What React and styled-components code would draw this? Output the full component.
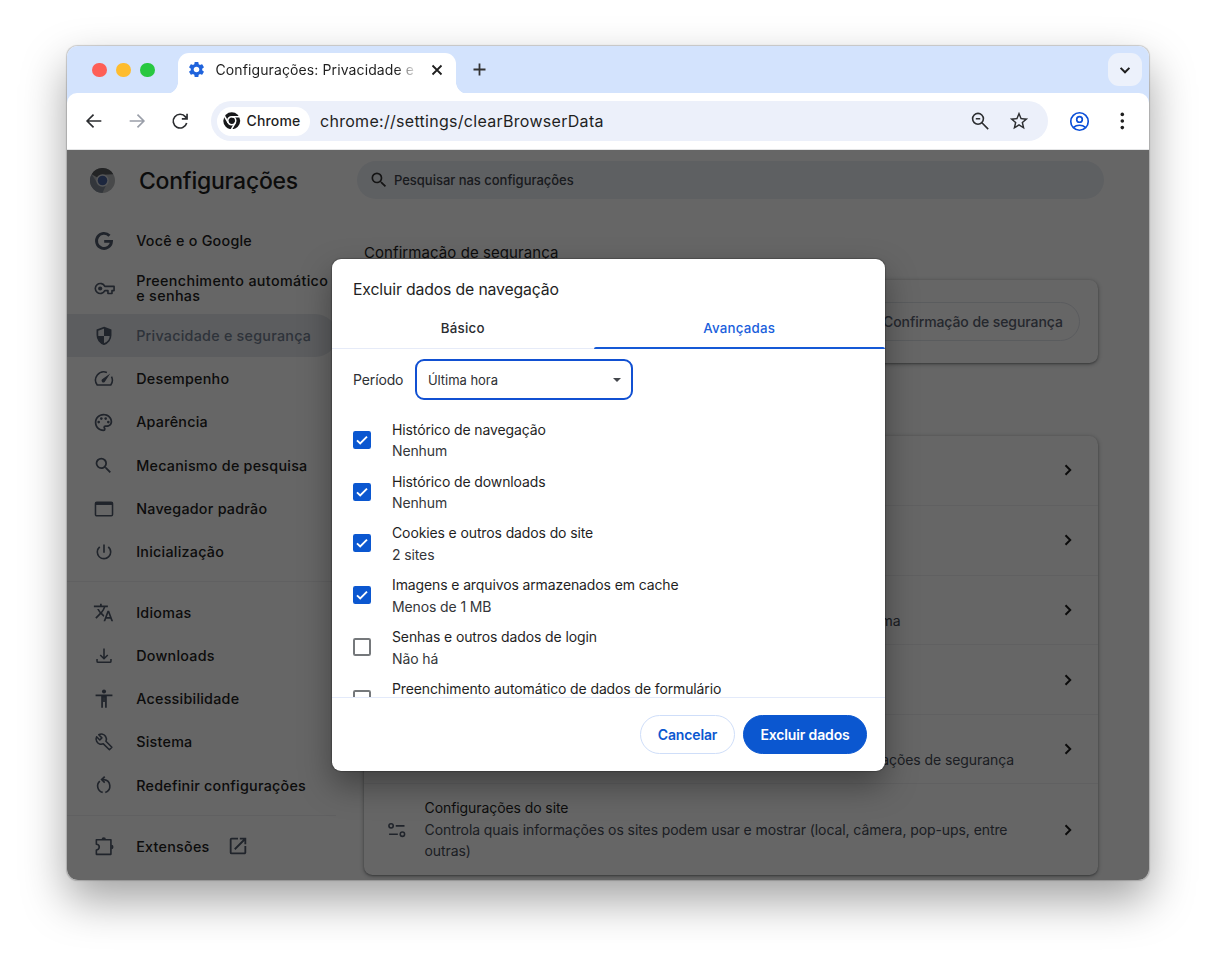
import React from 'react';
import styled, { createGlobalStyle } from 'styled-components';
import {
  MdSearch, MdOutlinePalette, MdTranslate, MdOpenInNew, MdPowerSettingsNew,
  MdStarOutline, MdSettings,
} from 'react-icons/md';

const GlobalStyle = createGlobalStyle`
  * { box-sizing: border-box; }
  body { margin: 0; background: #fff; font-family: Inter, "Liberation Sans", sans-serif; color: #1f1f1f; }
  svg { display: block; flex: none; }
  button { font-family: inherit; padding: 0; margin: 0; }
`;

const Desktop = styled.div`
  height: 969px;
  padding: 46px 67px 0;
  overflow: hidden;
`;
const Window = styled.div`
  width: 1082px;
  height: 834px;
  border-radius: 11px;
  overflow: hidden;
  display: flex;
  flex-direction: column;
  box-shadow: 0 0 1px 0.5px rgba(0, 0, 0, 0.18), 0 20px 45px rgba(0, 0, 0, 0.37);
`;

/* Tab strip */
const TabStrip = styled.div`
  height: 48px;
  flex: none;
  display: flex;
  align-items: flex-start;
  padding: 7px 7px 0 25px;
  background: #d3e3fd;
`;
const Lights = styled.div`
  display: flex;
  gap: 9.3px;
  padding-top: 9.5px;
  width: 86px;
`;
const Light = styled.span`
  width: 14.8px;
  height: 14.8px;
  border-radius: 50%;
  background: ${p => p.$color};
`;
const Tab = styled.div`
  position: relative;
  width: 278px;
  height: 41px;
  border-radius: 11px 11px 0 0;
  background: #fff;
  display: flex;
  align-items: center;
  padding: 0 12.5px 8px 9px;
  &::before, &::after {
    content: "";
    position: absolute;
    bottom: 0;
    width: 12px;
    height: 12px;
  }
  &::before { left: -12px; background: radial-gradient(circle at 0 0, transparent 11.6px, #fff 12.2px); }
  &::after { right: -12px; background: radial-gradient(circle at 100% 0, transparent 11.6px, #fff 12.2px); }
`;
const TabTitle = styled.div`
  flex: 1;
  margin-left: 9.5px;
  margin-right: 10px;
  white-space: nowrap;
  font-size: 14px;
  line-height: 22px;
  letter-spacing: 0.11px;
  mask-image: linear-gradient(to right, #000 180px, transparent 202px);
`;
const NewTab = styled.div`
  margin-left: 16px;
  padding-top: 9px;
  flex: 1;
`;
const TabSearch = styled.div`
  width: 34px;
  height: 33px;
  border-radius: 11px;
  background: #ecf1fb;
  display: grid;
  place-items: center;
`;

/* Toolbar */
const Toolbar = styled.div`
  height: 56px;
  flex: none;
  background: #fff;
  border-radius: 10px 10px 0 0;
  margin-top: -1px;
  padding: 0 16px 0 16px;
  display: flex;
  align-items: center;
`;
const ToolbarBack = styled.div`
  background: linear-gradient(#d3e3fd 14px, #fff 14px);
  flex: none;
  border-bottom: 1px solid #e4e5e6;
`;
const NavButtons = styled.div`
  display: flex;
  gap: 21px;
  width: 128px;
  flex: none;
`;
const Omnibox = styled.div`
  width: 837px;
  flex: none;
  height: 40px;
  border-radius: 20px;
  background: #ecf0fa;
  display: flex;
  align-items: center;
  padding: 0 18px 0 6px;
`;
const Chip = styled.div`
  width: 93px;
  height: 29px;
  border-radius: 15px;
  background: #fff;
  display: flex;
  align-items: center;
  gap: 6px;
  padding: 0 0 1px 6px;
  font-size: 14px;
  font-weight: 500;
  letter-spacing: 0.17px;
`;
const Url = styled.div`
  flex: 1;
  margin-left: 10px;
  font-size: 16px;
  line-height: 20px;
  letter-spacing: 0.29px;
`;
const OmniIcons = styled.div`
  display: flex;
  gap: 17px;
`;
const ProfileButton = styled.div`
  margin-left: 21px;
`;
const MenuButton = styled.div`
  margin-left: 21px;
`;

/* Page */
const Page = styled.div`
  position: relative;
  flex: 1;
  min-height: 0;
  background: #fff;
  overflow: hidden;
  display: flex;
`;
const Sidebar = styled.nav`
  width: 290px;
  flex: none;
`;
const Brand = styled.div`
  height: 62px;
  display: flex;
  align-items: center;
  padding: 0 0 1px 23px;
  gap: 24px;
  font-size: 23px;
  font-weight: 500;
  letter-spacing: -0.25px;
`;
const MenuGroup = styled.div`
  padding-top: ${p => p.$top || 0}px;
`;
const MenuItem = styled.div`
  width: 270px;
  height: ${p => (p.$tall ? 51.8 : 43.2)}px;
  border-radius: 0 22px 22px 0;
  display: flex;
  align-items: center;
  padding-left: 25.6px;
  gap: 21.6px;
  color: ${p => (p.$active ? '#747f92' : '#222222')};
  background: ${p => (p.$active ? '#e6e9ed' : 'transparent')};
  svg { color: #505a6b; }
`;
const MenuIcon = styled.span`
  width: 22px;
  height: 22px;
  display: grid;
  place-items: center;
`;
const MenuLabel = styled.span`
  font-size: 14.3px;
  line-height: 15.5px;
  font-weight: 500;
  letter-spacing: ${p => (p.$tall ? 0.36 : 0.26)}px;
  white-space: pre;
`;
const MenuDivider = styled.div`
  height: 1px;
  width: 269px;
  margin: 8.2px 0 8.6px;
  background: #f0f1f3;
`;
const ExternalMark = styled.span`
  margin-left: -4px;
`;

const Main = styled.main`
  width: 747px;
  padding-top: 11px;
`;
const SearchField = styled.div`
  height: 38px;
  border-radius: 19px;
  background: #ebeff5;
  display: flex;
  align-items: center;
  gap: 5.5px;
  padding: 0 0 1px 11.5px;
  font-size: 13px;
  color: #3f444c;
  font-weight: 500;
  letter-spacing: -0.02px;
  svg { color: #333; }
`;
const SectionTitle = styled.h2`
  margin: 43px 0 17px 7px;
  font-size: 15px;
  font-weight: 400;
  line-height: 21px;
  letter-spacing: 0.07px;
`;
const Card = styled.section`
  width: 734px;
  margin-left: 7px;
  border-radius: 8.5px;
  background: #fff;
  box-shadow: 0 1px 2px rgba(60, 64, 67, 0.45), 0 1px 4px 1px rgba(60, 64, 67, 0.25);
`;
const CheckCard = styled(Card)`
  height: 83px;
  display: flex;
  align-items: center;
  justify-content: flex-end;
  padding-right: 18px;
`;
const PillAction = styled.button`
  height: 39px;
  width: 215px;
  padding: 0 17px;
  text-align: right;
  border: 1px solid #e2e5ec;
  border-radius: 20px;
  background: transparent;
  font-size: 14px;
  font-weight: 500;
  letter-spacing: -0.08px;
  color: #5c6473;
  white-space: nowrap;
`;
const PrivacyCard = styled(Card)`
  margin-top: 72.5px;
`;
const PrivacyRow = styled.div`
  height: ${p => (p.$tall ? 91.4 : 69.6)}px;
  border-top: ${p => (p.$first ? 'none' : '1px solid #f0f1f3')};
  display: flex;
  align-items: center;
  padding: 0 21px 0 23.5px;
`;
const RowIcon = styled.span`
  width: 37px;
  flex: none;
  color: #505a6b;
  svg { margin-left: -1px; }
`;
const RowText = styled.div`
  flex: 1;
  font-size: 14px;
  line-height: 21.6px;
  letter-spacing: -0.083px;
`;
const RowDesc = styled.div`
  width: 590px;
  color: #474d57;
  padding-right: ${p => p.$end || 0}px;
  padding-top: ${p => p.$drop || 0}px;
  text-align: ${p => (p.$end !== undefined ? 'right' : 'left')};
`;

/* Dialog */
const Scrim = styled.div`
  position: absolute;
  inset: 0;
  background: rgba(0, 0, 0, 0.6);
`;
const Dialog = styled.div`
  position: absolute;
  left: 264.5px;
  top: 109px;
  width: 553px;
  height: 512px;
  border-radius: 9px;
  background: #fff;
  overflow: hidden;
  display: flex;
  flex-direction: column;
  box-shadow: 0 0 1px 1px rgba(0, 0, 0, 0.2), 0 14px 32px rgba(0, 0, 0, 0.36);
`;
const DialogTitle = styled.h1`
  margin: 0;
  height: 49px;
  flex: none;
  padding: 19.5px 0 0 21.5px;
  font-size: 15.8px;
  line-height: 22px;
  font-weight: 400;
  letter-spacing: -0.15px;
`;
const Tabs = styled.div`
  height: 41px;
  flex: none;
  display: flex;
  border-bottom: 1px solid #e6ebf8;
`;
const TabItem = styled.div`
  position: relative;
  width: ${p => p.$width}px;
  padding-top: 9.5px;
  line-height: 21px;
  text-align: center;
  font-size: 13.3px;
  font-weight: 500;
  letter-spacing: 0.22px;
  color: ${p => (p.$active ? '#1a5fdc' : '#2a2c30')};
  &::after {
    content: "";
    position: absolute;
    left: 0;
    right: 0;
    bottom: -1px;
    height: ${p => (p.$active ? 2.5 : 0)}px;
    border-radius: 2px 2px 0 0;
    background: #1559d6;
  }
`;
const DialogBody = styled.div`
  height: 347.6px;
  flex: none;
  overflow: hidden;
  padding: 10px 0 0 21.5px;
`;
const PeriodRow = styled.div`
  display: flex;
  align-items: center;
  gap: 12px;
  margin-bottom: 18.9px;
  font-size: 14px;
  letter-spacing: -0.13px;
  color: #2e3034;
`;
const Select = styled.div`
  width: 218px;
  height: 41px;
  border: 2px solid #1150d2;
  border-radius: 9px;
  display: flex;
  align-items: center;
  justify-content: space-between;
  padding: 0 9px 0 10.5px;
  font-size: 13px;
  letter-spacing: -0.03px;
`;
const DataRow = styled.div`
  height: 51.8px;
  display: flex;
  align-items: flex-start;
  gap: 21px;
`;
const CheckBox = styled.span`
  width: 18px;
  height: 18px;
  margin-top: 12px;
  border-radius: 2.2px;
  border: 2px solid ${p => (p.$checked ? '#0b57d0' : '#75787b')};
  background: ${p => (p.$checked ? '#0b57d0' : '#fff')};
  display: grid;
  place-items: center;
`;
const DataText = styled.div`
  font-size: 14px;
  line-height: 21.6px;
  letter-spacing: -0.12px;
  color: #1f1f1f;
`;
const DataSub = styled.div`
  color: #34363a;
`;
const DialogActions = styled.div`
  flex: 1;
  border-top: 1px solid #e3eafa;
  display: flex;
  justify-content: flex-end;
  gap: 8px;
  padding: 17.4px 17.5px 0 0;
`;
const ActionButton = styled.button`
  width: ${p => p.$width}px;
  height: 39px;
  border-radius: 20px;
  border: 1px solid ${p => (p.$primary ? '#0b57d0' : '#cfdef9')};
  background: ${p => (p.$primary ? '#0b57d0' : '#fff')};
  color: ${p => (p.$primary ? '#fff' : '#0b57d0')};
  font-size: 14px;
  font-weight: 600;
  letter-spacing: -0.14px;
`;

const Icon = ({ size = 22, box = 24, children, ...rest }) => (
  <svg width={size} height={size} viewBox={`0 0 ${box} ${box}`} fill="none" stroke="currentColor" strokeWidth="1.8" {...rest}>{children}</svg>
);

const ChromeIcon = () => (
  <Icon size={17.5} stroke="#fff" strokeWidth="2.1">
    <circle cx="12" cy="12" r="11.6" fill="#17181a" stroke="none" />
    <circle cx="12" cy="12" r="5.5" fill="#17181a" />
    <path d="M12 6.5H23.500" />
    <path d="M12 6.500H23.500" transform="rotate(120 12 12)" />
    <path d="M12 6.500H23.500" transform="rotate(240 12 12)" />
  </Icon>
);
const GoogleG = () => (
  <Icon size={22} strokeWidth="3.1"><path d="M18 6.3A8.2 8.2 0 1 0 20.2 12.4H12.2" /></Icon>
);
const KeyIcon = () => (
  <Icon size={23} strokeWidth="1.7">
    <path d="M12.3 9.8A5.2 5.2 0 1 0 12.3 14.2H15.6V17.2H19.8V14.2H22V9.8Z" strokeLinejoin="round" />
    <circle cx="7.5" cy="12" r="2.2" fill="currentColor" stroke="none" />
  </Icon>
);
const ShieldIcon = () => (
  <Icon size={22}>
    <path d="M12 2.9 19.2 5.6V11.2C19.2 15.6 16.2 19.6 12 20.9 7.8 19.6 4.8 15.6 4.8 11.2V5.6Z" strokeWidth="1.9" />
    <path d="M12 3V12H19.2V5.6ZM12 12V21C8 19.7 5.2 16 4.8 12Z" fill="currentColor" stroke="none" />
  </Icon>
);
const SpeedIcon = () => (
  <Icon size={22} strokeWidth="1.7">
    <path d="M15.2 4.9A9 9 0 0 0 4.6 18.6H19.4A9 9 0 0 0 20.2 9.4" />
    <path d="M18.8 6 10.4 12A2 2 0 1 0 13.1 14.7Z" fill="currentColor" stroke="none" />
  </Icon>
);
const BrowserIcon = () => (
  <Icon size={22} strokeWidth="1.7">
    <rect x="2.7" y="4.6" width="18.6" height="14.8" rx="1.4" />
    <path d="M3 6.2H21" strokeWidth="2.8" />
  </Icon>
);
const DownloadIcon = () => (
  <Icon size={22} strokeWidth="1.7"><path d="M12 3.8V14.8M7.9 10.9 12 15 16.1 10.9M4.4 15.4V17.7Q4.4 18.9 5.6 18.9H18.4Q19.6 18.9 19.6 17.7V15.4" /></Icon>
);
const AccessIcon = () => (
  <Icon size={22}>
    <circle cx="12" cy="3.8" r="2.2" fill="currentColor" stroke="none" />
    <path d="M2.8 8H21.2M9.9 8V21.6M14.1 8V21.6M9.5 9.4H14.5M12 9V15.4" strokeWidth="1.9" />
  </Icon>
);
const WrenchIcon = () => (
  <Icon size={22} strokeWidth="1.7">
    <path d="M3.9 6.3 7.4 9.8 9.7 7.5 6.3 4.1C9 2.6 12.2 3.4 13.8 6 14.9 7.7 14.8 9.6 14.1 11.2L20.6 17.8 17.9 20.5 11.3 14C8.6 15 5.4 14.1 4 11.3 3.1 9.7 3.1 7.9 3.9 6.3Z" strokeLinejoin="round" />
  </Icon>
);
const ResetIcon = () => (
  <Icon size={22} strokeWidth="1.8">
    <path d="M7.5 7.7A7.2 7.2 0 0 0 10.6 20.1M13.4 20.1A7.2 7.2 0 0 0 12 6.1H10" />
    <path d="M12.8 2.8 9.4 6.1 12.8 9.4" />
  </Icon>
);
const PuzzleIcon = () => (
  <Icon size={23} strokeWidth="1.7">
    <path d="M3.5 5H18.7V20.2H3.5V15.6A3 3 0 0 0 3.5 9.6Z" strokeLinejoin="round" />
    <path d="M8.9 4.7A2.3 2.3 0 0 1 13.5 4.7ZM19.1 10.3A2.3 2.3 0 0 1 19.1 14.9Z" fill="currentColor" stroke="none" />
  </Icon>
);
const TuneIcon = () => (
  <Icon size={20} strokeWidth="1.9">
    <circle cx="4.9" cy="7" r="2.6" /><path d="M10.5 7H21M2.5 17H13" /><circle cx="18.5" cy="17" r="2.6" />
  </Icon>
);
const ZoomOutIcon = () => (
  <Icon size={22} box={22} strokeWidth="1.6" color="#2c2e31">
    <circle cx="9" cy="8.8" r="5.4" /><path d="M12.9 12.8 19.2 19.1M6.8 8.8H11.2" />
  </Icon>
);
const Chevron = () => (
  <Icon size={18} box={18} strokeWidth="2"><path d="M6.5 4.3 11.2 9 6.5 13.7" /></Icon>
);
const BrandLogo = () => (
  <svg width="25" height="25" viewBox="0 0 24 24">
    <circle cx="12" cy="12" r="12" fill="#b4b6b9" />
    <path d="M12 12 1.6 6A12 12 0 0 1 22.4 6L12 6.5Z" fill="#585a5d" />
    <path d="M1.6 6A12 12 0 0 0 12 24L16 15 7 14.5Z" fill="#7f8894" />
    <circle cx="12" cy="12" r="6" fill="#d4d6da" />
    <circle cx="12" cy="12" r="4.6" fill="#4a629b" />
  </svg>
);

const primaryMenu = [
  { label: 'Você e o Google', icon: <GoogleG /> },
  { label: 'Preenchimento automático\ne senhas', icon: <KeyIcon />, tall: true },
  { label: 'Privacidade e segurança', icon: <ShieldIcon />, active: true },
  { label: 'Desempenho', icon: <SpeedIcon /> },
  { label: 'Aparência', icon: <MdOutlinePalette size={21} /> },
  { label: 'Mecanismo de pesquisa', icon: <MdSearch size={21} /> },
  { label: 'Navegador padrão', icon: <BrowserIcon /> },
  { label: 'Inicialização', icon: <MdPowerSettingsNew size={20} /> },
];
const advancedMenu = [
  { label: 'Idiomas', icon: <MdTranslate size={21} /> },
  { label: 'Downloads', icon: <DownloadIcon /> },
  { label: 'Acessibilidade', icon: <AccessIcon /> },
  { label: 'Sistema', icon: <WrenchIcon /> },
  { label: 'Redefinir configurações', icon: <ResetIcon /> },
];
const extensionsMenu = [{ label: 'Extensões', icon: <PuzzleIcon />, external: true }];

const dataTypes = [
  { label: 'Histórico de navegação', sub: 'Nenhum', checked: true },
  { label: 'Histórico de downloads', sub: 'Nenhum', checked: true },
  { label: 'Cookies e outros dados do site', sub: '2 sites', checked: true },
  { label: 'Imagens e arquivos armazenados em cache', sub: 'Menos de 1 MB', checked: true },
  { label: 'Senhas e outros dados de login', sub: 'Não há' },
  { label: 'Preenchimento automático de dados de formulário' },
];

const Menu = ({ items }) => items.map(it => (
  <MenuItem key={it.label} $tall={it.tall} $active={it.active}>
    <MenuIcon>{it.icon}</MenuIcon>
    <MenuLabel $tall={it.tall}>{it.label}</MenuLabel>
    {it.external && <ExternalMark><MdOpenInNew size={22} /></ExternalMark>}
  </MenuItem>
));

export default function App() {
  return (
    <Desktop>
      <GlobalStyle />
      <Window>
        <TabStrip>
          <Lights>
            <Light $color="#fe5f57" /><Light $color="#febc2e" /><Light $color="#28c840" />
          </Lights>
          <Tab>
            <MdSettings size={19} color="#1f63dc" />
            <TabTitle>Configurações: Privacidade e</TabTitle>
            <Icon size={14} box={14} strokeWidth="1.8" color="#1f1f1f"><path d="M2.5 2.5 11.5 11.5M11.5 2.5 2.5 11.5" /></Icon>
          </Tab>
          <NewTab>
            <Icon size={15} box={15} strokeWidth="1.8" color="#333"><path d="M7.5 1.5V13.5M1.5 7.5H13.5" /></Icon>
          </NewTab>
          <TabSearch>
            <Icon size={14} box={14} strokeWidth="2" color="#1f1f1f"><path d="M2.6 4.9 7 9.3 11.4 4.9" /></Icon>
          </TabSearch>
        </TabStrip>
        <ToolbarBack>
          <Toolbar>
            <NavButtons>
              <Icon color="#2c2e31"><path d="M20 12H4.6M11.5 5 4.5 12 11.5 19" /></Icon>
              <Icon color="#9a9fa9"><path d="M4 12H19.4M12.5 5 19.5 12 12.5 19" /></Icon>
              <Icon color="#2c2e31"><path d="M19.3 14.2A7.5 7.5 0 1 1 18 7.5L19.6 9.6M19.7 4V9.7H14" /></Icon>
            </NavButtons>
            <Omnibox>
              <Chip><ChromeIcon />Chrome</Chip>
              <Url>chrome://settings/clearBrowserData</Url>
              <OmniIcons>
                <ZoomOutIcon />
                <MdStarOutline size={22} color="#2c2e31" />
              </OmniIcons>
            </Omnibox>
            <ProfileButton>
              <Icon size={21} color="#0b4fd8" strokeWidth="1.9">
                <circle cx="12" cy="12" r="10" /><circle cx="12" cy="9.7" r="3.2" />
                <path d="M5.3 18.8C8.8 15.4 15.2 15.4 18.7 18.8" />
              </Icon>
            </ProfileButton>
            <MenuButton>
              <Icon size={22} box={22} color="#1f1f1f">
                <g fill="currentColor" stroke="none"><circle cx="11.3" cy="4.4" r="1.8" /><circle cx="11.3" cy="11" r="1.8" /><circle cx="11.3" cy="17.6" r="1.8" /></g>
              </Icon>
            </MenuButton>
          </Toolbar>
        </ToolbarBack>
        <Page>
          <Sidebar>
            <Brand><BrandLogo />Configurações</Brand>
            <MenuGroup $top={7.2}><Menu items={primaryMenu} /></MenuGroup>
            <MenuDivider />
            <MenuGroup><Menu items={advancedMenu} /></MenuGroup>
            <MenuDivider />
            <MenuGroup><Menu items={extensionsMenu} /></MenuGroup>
          </Sidebar>
          <Main>
            <SearchField><MdSearch size={20} />Pesquisar nas configurações</SearchField>
            <SectionTitle>Confirmação de segurança</SectionTitle>
            <CheckCard><PillAction>Confirmação de segurança</PillAction></CheckCard>
            <PrivacyCard>
              <PrivacyRow $first><RowText /><Chevron /></PrivacyRow>
              <PrivacyRow><RowText /><Chevron /></PrivacyRow>
              <PrivacyRow><RowIcon /><RowText><RowDesc $end={114} $drop={21.6}>anônima</RowDesc></RowText><Chevron /></PrivacyRow>
              <PrivacyRow><RowText /><Chevron /></PrivacyRow>
              <PrivacyRow><RowIcon /><RowText><RowDesc $end={0.5} $drop={22}>configurações de segurança</RowDesc></RowText><Chevron /></PrivacyRow>
              <PrivacyRow $tall>
                <RowIcon><TuneIcon /></RowIcon>
                <RowText>
                  Configurações do site
                  <RowDesc>Controla quais informações os sites podem usar e mostrar (local, câmera, pop-ups, entre outras)</RowDesc>
                </RowText>
                <Chevron />
              </PrivacyRow>
            </PrivacyCard>
          </Main>
          <Scrim />
          <Dialog>
            <DialogTitle>Excluir dados de navegação</DialogTitle>
            <Tabs>
              <TabItem $width={262.5}>Básico</TabItem>
              <TabItem $width={290.5} $active>Avançadas</TabItem>
            </Tabs>
            <DialogBody>
              <PeriodRow>
                Período
                <Select>
                  Última hora
                  <Icon size={10} box={10}><path d="M1 3H9L5 7Z" fill="#44474c" stroke="none" /></Icon>
                </Select>
              </PeriodRow>
              {dataTypes.map(d => (
                <DataRow key={d.label}>
                  <CheckBox $checked={d.checked}>
                    {d.checked && <Icon size={14} box={14} color="#fff" strokeWidth="1.9"><path d="M2 7.4 5.2 10.5 12 3.6" /></Icon>}
                  </CheckBox>
                  <DataText>{d.label}{d.sub && <DataSub>{d.sub}</DataSub>}</DataText>
                </DataRow>
              ))}
            </DialogBody>
            <DialogActions>
              <ActionButton $width={95}>Cancelar</ActionButton>
              <ActionButton $width={124} $primary>Excluir dados</ActionButton>
            </DialogActions>
          </Dialog>
        </Page>
      </Window>
    </Desktop>
  );
}
